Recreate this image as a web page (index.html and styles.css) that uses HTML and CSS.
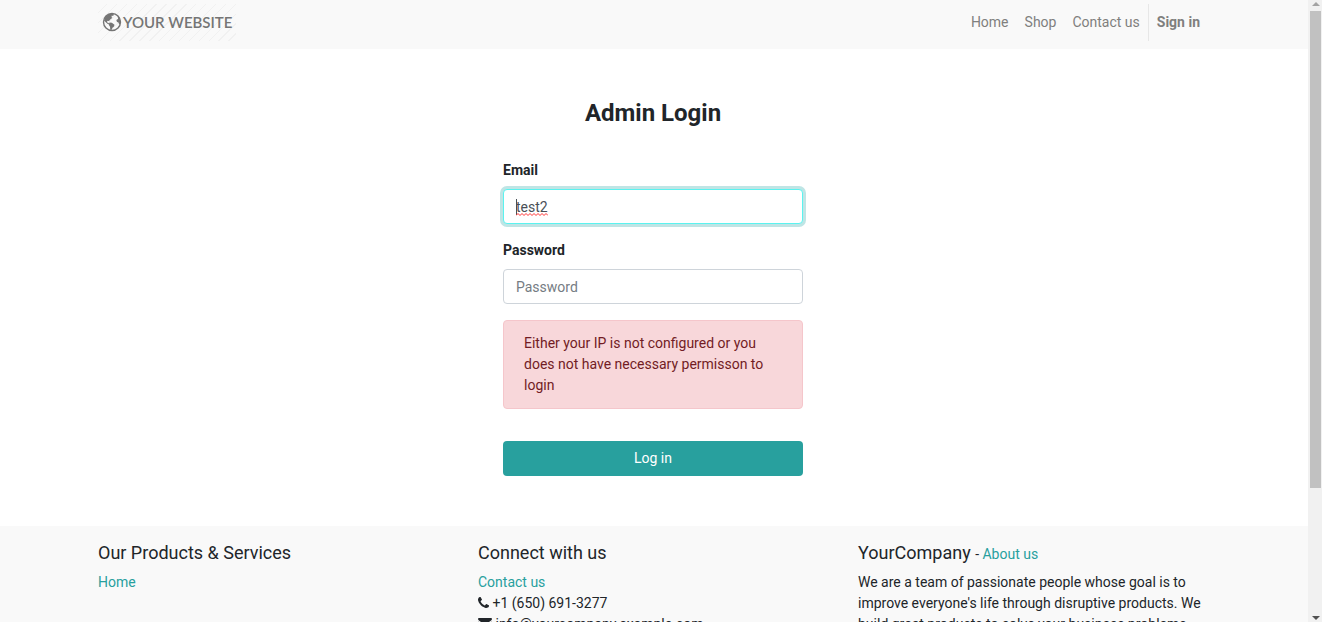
FILE: index.html
```html
<!DOCTYPE html>
<html lang="en">
<head>
<meta charset="utf-8">
<title>Login | Your Website</title>
<link rel="stylesheet" href="styles.css">
</head>
<body>
<div class="page">
  <header class="header">
    <div class="container header-row">
      <a class="logo" href="#">
        <svg class="logo-globe" viewBox="0 0 20 20" aria-hidden="true">
          <circle cx="10" cy="10" r="8.500" fill="none" stroke="currentColor" stroke-width="1.400"/>
          <path fill="currentColor" d="M2 8.500 3.500 4.500 7 2l3.500-.5 1.500 1.200-1 1.300-1.200-.4-.3 1.600 1 .6-1.600 1.200-1.400 1.200-.3 1.100-1.300-.5-.9.8.6 1.100 1.400.5.4 1.200-2-.7L3.500 10z"/>
          <path fill="currentColor" d="m7.500 10.500 2.300.3 2.700 1.900-.5 1.800-1.500 1.200-1.200 2.500-1-.5-.3-3-1.300-2z"/>
          <path fill="currentColor" d="m15.500 4 1.700 1.500 1.300 3.500-.5 3-.8.8-.7-2.400-1.400-.4-.7-1.300.4-1.200 1.400-.6-.3-1.100z"/>
        </svg>
        <span>YOUR WEBSITE</span>
      </a>
      <nav class="nav">
        <a href="#">Home</a>
        <a href="#">Shop</a>
        <a href="#">Contact us</a>
        <a class="sign-in" href="#">Sign in</a>
      </nav>
    </div>
  </header>
  <main class="main">
    <div class="container">
      <form class="login">
        <h1>Admin Login</h1>
        <div class="field">
          <label for="email">Email</label>
          <div class="control">
            <input class="input focused" id="email" type="text" value="test2" spellcheck="false">
            <span class="caret"></span>
            <svg class="squiggle" viewBox="0 0 32 3" aria-hidden="true"><path d="M0 2.500 2 .5l2 2 2-2 2 2 2-2 2 2 2-2 2 2 2-2 2 2 2-2 2 2 2-2 2 2 2-2 2 2" fill="none" stroke="#f33" stroke-width="1"/></svg>
          </div>
        </div>
        <div class="field">
          <label for="password">Password</label>
          <input class="input" id="password" type="password" placeholder="Password">
        </div>
        <p class="alert" role="alert">Either your IP is not configured or you does not have necessary permisson to login</p>
        <button class="submit" type="submit">Log in</button>
      </form>
    </div>
  </main>
  <footer class="footer">
    <div class="container footer-grid">
      <section>
        <h2>Our Products &amp; Services</h2>
        <ul><li><a href="#">Home</a></li></ul>
      </section>
      <section>
        <h2>Connect with us</h2>
        <ul>
          <li><a href="#">Contact us</a></li>
          <li><svg class="phone" viewBox="0 0 1408 1408" aria-hidden="true"><path fill="currentColor" d="M1408 1112q0 27-10 70.500t-21 68.500q-21 50-122 106-94 51-186 51-27 0-53-3.500t-57.500-12.500-47-14.500-55.500-20.500-49-18q-98-35-175-83-127-79-264-216t-216-264q-48-77-83-175-3-9-18-49t-20.500-55.500-14.500-47-12.500-57.500-3.500-53q0-92 51-186 56-101 106-122 25-11 68.500-21t70.500-10q14 0 21 3 18 6 53 76 11 19 30 54t35 63.500 31 53.500q3 4 17.500 25t21.500 35.500 7 28.500q0 20-28.500 50t-62 55-62 53-28.500 46q0 9 5 22.500t8.500 20.500 14 24 11.500 19q76 137 174 235t235 174q2 1 19 11.500t24 14 20.500 8.500 22.500 5q18 0 46-28.500t53-62 55-62 50-28.500q14 0 28.500 7t35.500 21.500 25 17.500q25 15 53.500 31t63.500 35 54 30q70 35 76 53 3 7 3 21z"/></svg> +1 (650) 691-3277</li>
          <li><svg class="envelope" viewBox="0 0 14 11" aria-hidden="true"><path fill="currentColor" d="M1 0h12q1 0 1 1 0 1-1.500 2L8 6Q7 6.700 6 6L1.500 3Q0 2 0 1 0 0 1 0zM0 3.500l6 4q1 .6 2 0l6-4V10q0 1-1 1H1q-1 0-1-1z"/></svg> info@yourcompany.example.com</li>
        </ul>
      </section>
      <section>
        <h2>YourCompany <small>- <a href="#">About us</a></small></h2>
        <p>We are a team of passionate people whose goal is to improve everyone's life through disruptive products. We build great products to solve your business problems.</p>
      </section>
    </div>
  </footer>
</div>
<div class="scrollbar" aria-hidden="true">
  <svg class="arrow arrow-up" viewBox="0 0 8 4"><path fill="currentColor" d="M0 4 4 0l4 4z"/></svg>
  <div class="track"><div class="thumb"></div></div>
  <svg class="arrow" viewBox="0 0 8 4"><path fill="currentColor" d="M0 0h8L4 4z"/></svg>
</div>
</body>
</html>
```
FILE: styles.css
```css
* { box-sizing: border-box; }

body {
  display: flex;
  height: 100vh;
  margin: 0;
  overflow: hidden;
  background: #fff;
  color: #212529;
  font: 14px/21px Roboto, sans-serif;
}

h1, h2, p, ul { margin: 0; padding: 0; }
ul { list-style: none; }
a { color: #28a09e; text-decoration: none; }

.page { flex: 1; min-width: 0; overflow: hidden; }

.container {
  max-width: 1142px;
  margin: 0 auto;
  padding: 0 17px 0 15px;
}

.header { padding: 4px 0 8px; background: #f9f9f9; }
.header-row { display: flex; justify-content: space-between; }

.logo {
  display: flex;
  align-items: center;
  height: 37px;
  padding: 0 4px 2px;
  gap: 1px;
  background: repeating-linear-gradient(135deg, #f9f9f9 0 6px, #f1f1f1 6px 7px);
  color: #757575;
  font: 500 16px/20px Lato, sans-serif;
  font-size: 15px;
  font-weight: 600;
  white-space: nowrap;
}
.logo-globe { width: 20px; height: 20px; }

.nav { display: flex; }
.nav a { padding: 8px; color: #807f7e; }
.nav .sign-in { border-left: 1px solid #e7e7e7; font-weight: 700; }

.main { padding: 48px 0 50px; }
.login { max-width: 300px; margin: 0 auto; }
.login h1 {
  margin-bottom: 31px;
  font-size: 24px;
  line-height: 32px;
  text-align: center;
}
.field { margin-bottom: 16px; }
.field label { display: block; margin-bottom: 8px; font-weight: 700; }
.control { position: relative; }
.input {
  display: block;
  width: 100%;
  height: 35px;
  padding: 6px 12px;
  border: 1px solid #ced4da;
  border-radius: 4px;
  outline: 0;
  background: #fff;
  color: #495057;
  font: inherit;
}
.input::placeholder { color: #757c83; opacity: 1; }
.focused { border-color: #5bf3f0; box-shadow: 0 0 0 3px #bfe5e5; }
.caret {
  position: absolute;
  top: 10px;
  left: 13px;
  width: 1px;
  height: 16px;
  background: #495057;
}
.squiggle { position: absolute; top: 24px; left: 13px; width: 32px; height: 3px; }

.alert {
  padding: 12px 20px;
  border: 1px solid #f5c6cb;
  border-radius: 4px;
  background: #f8d7da;
  color: #721c24;
}
.submit {
  display: block;
  width: 100%;
  height: 35px;
  margin-top: 32px;
  border: 0;
  border-radius: 4px;
  background: #28a09e;
  color: #fff;
  font: inherit;
}

.footer { padding: 16px 0; background: #f9f9f9; }
.footer-grid { display: grid; grid-template-columns: repeat(3, 1fr); gap: 30px; }
.footer h2 { margin-bottom: 8px; font-size: 18px; font-weight: 400; line-height: 22px; }
.footer small { font-size: 14px; line-height: 14px; }
.phone { width: 11px; height: 11px; }
.envelope { width: 14px; height: 11px; }

.scrollbar {
  display: flex;
  flex-direction: column;
  align-items: center;
  width: 14px;
  padding: 2px 1px 2px 2px;
  background: #f1f1f1;
  color: #505050;
}
.arrow { flex: none; width: 8px; height: 4px; }
.arrow-up { color: #a3a3a3; }
.track { flex: 1; width: 100%; padding: 5px 0 9px; }
.thumb { height: 80%; background: #c1c1c1; }
```
